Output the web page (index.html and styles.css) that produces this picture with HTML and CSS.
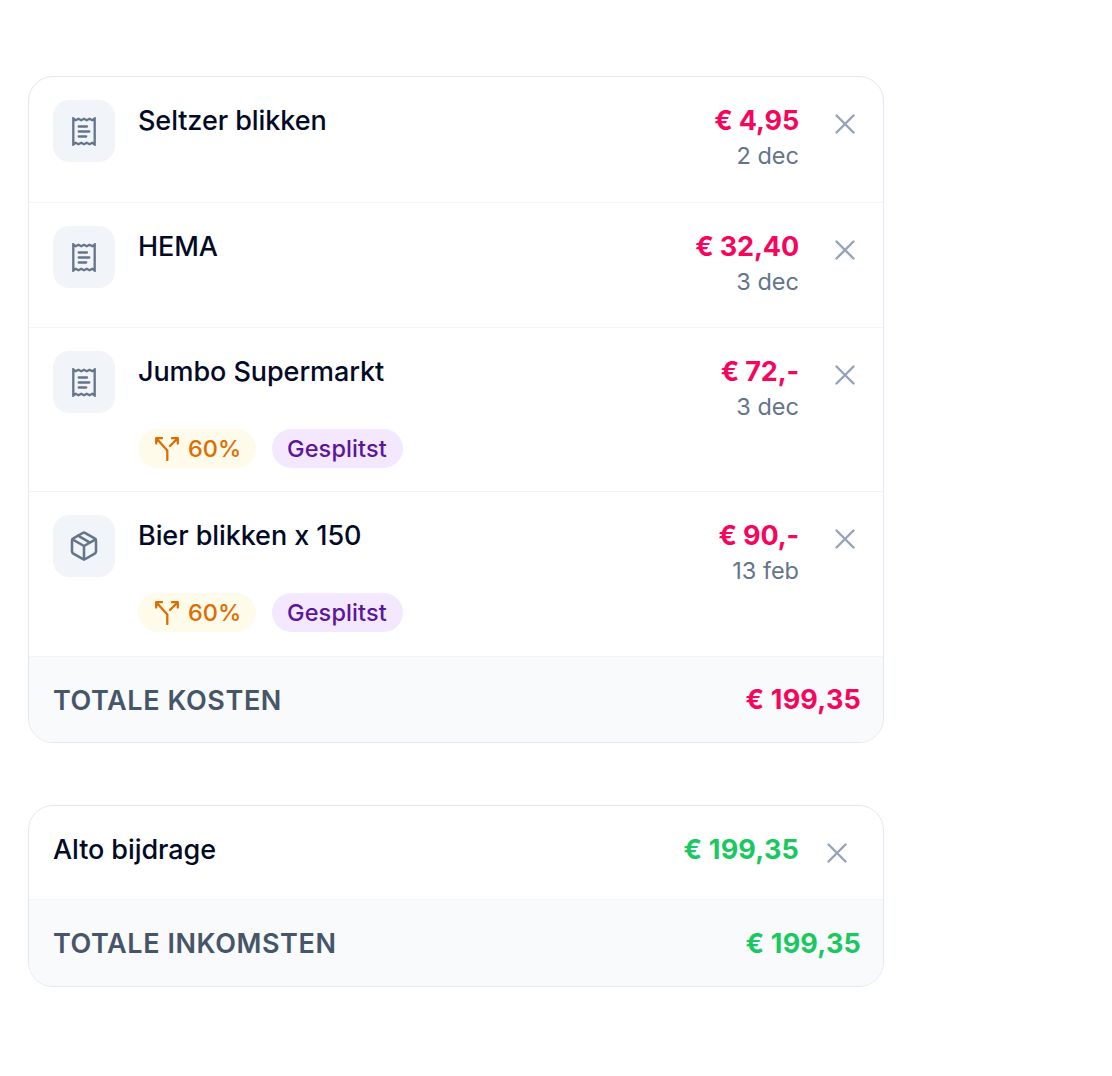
FILE: index.html
```html
<!DOCTYPE html>
<html lang="nl">
<head>
<meta charset="utf-8">
<title>Kosten en inkomsten</title>
<link rel="stylesheet" href="styles.css">
</head>
<body>

<!-- shared icons -->
<svg class="sprite">
  <symbol id="icon-receipt" viewBox="0 0 24 29">
    <path class="edge" d="M1.300 1.500L3.700 3.200L6.500 1.800L9.200 3.200L12 1.800L14.800 3.200L17.500 1.800L20.300 3.200L22.700 1.500V27.500L20.300 25.800L17.500 27.200L14.800 25.800L12 27.200L9.200 25.800L6.500 27.200L3.700 25.800L1.300 27.500z"/>
    <path d="M6.700 9.500h8.300M6.700 14.500h10.600M6.700 19.500h7.500"/>
  </symbol>
  <symbol id="icon-box" viewBox="0 0 24 24">
    <path d="M21 16V8a2 2 0 0 0-1-1.730l-7-4a2 2 0 0 0-2 0l-7 4A2 2 0 0 0 3 8v8a2 2 0 0 0 1 1.730l7 4a2 2 0 0 0 2 0l7-4A2 2 0 0 0 21 16z"/>
    <path d="M3.300 7L12 12l8.700-5M12 22V12M7.500 4.270l9 5.150"/>
  </symbol>
  <symbol id="icon-split" viewBox="0 0 24 24">
    <path d="M12.300 22.900V13.600L1.500 1.500M1.200 6.500V1.200H7M22.500 1.500L15 9M17 1.200H22.800V6.500"/>
  </symbol>
  <symbol id="icon-close" viewBox="0 0 20 20">
    <path d="M1.500 1.500l17 17M18.500 1.500l-17 17"/>
  </symbol>
</svg>

<div id="container">
  <div class="card">
    <div class="row">
      <div class="icon-box"><svg class="receipt"><use href="#icon-receipt"/></svg></div>
      <div class="info">
        <div class="name">Seltzer blikken</div>
      </div>
      <div class="price">
        <div class="amount cost">€ 4,95</div>
        <div class="date">2 dec</div>
      </div>
      <button class="close"><svg><use href="#icon-close"/></svg></button>
    </div>

    <div class="row">
      <div class="icon-box"><svg class="receipt"><use href="#icon-receipt"/></svg></div>
      <div class="info">
        <div class="name">HEMA</div>
      </div>
      <div class="price">
        <div class="amount cost">€ 32,40</div>
        <div class="date">3 dec</div>
      </div>
      <button class="close"><svg><use href="#icon-close"/></svg></button>
    </div>

    <div class="row tall">
      <div class="icon-box"><svg class="receipt"><use href="#icon-receipt"/></svg></div>
      <div class="info">
        <div class="name">Jumbo Supermarkt</div>
        <div class="tags">
          <span class="tag percent"><svg><use href="#icon-split"/></svg>60%</span>
          <span class="tag split">Gesplitst</span>
        </div>
      </div>
      <div class="price">
        <div class="amount cost">€ 72,-</div>
        <div class="date">3 dec</div>
      </div>
      <button class="close"><svg><use href="#icon-close"/></svg></button>
    </div>

    <div class="row tall last">
      <div class="icon-box"><svg class="box"><use href="#icon-box"/></svg></div>
      <div class="info">
        <div class="name">Bier blikken x 150</div>
        <div class="tags">
          <span class="tag percent"><svg><use href="#icon-split"/></svg>60%</span>
          <span class="tag split">Gesplitst</span>
        </div>
      </div>
      <div class="price">
        <div class="amount cost">€ 90,-</div>
        <div class="date">13 feb</div>
      </div>
      <button class="close"><svg><use href="#icon-close"/></svg></button>
    </div>

    <div class="total">
      <span class="total-label">TOTALE KOSTEN</span>
      <span class="amount cost">€ 199,35</span>
    </div>
  </div>

  <div class="card">
    <div class="row income-row">
      <div class="info">
        <div class="name">Alto bijdrage</div>
      </div>
      <div class="price">
        <div class="amount income">€ 199,35</div>
      </div>
      <button class="close"><svg><use href="#icon-close"/></svg></button>
    </div>

    <div class="total">
      <span class="total-label">TOTALE INKOMSTEN</span>
      <span class="amount income">€ 199,35</span>
    </div>
  </div>
</div>

</body>
</html>
```
FILE: styles.css
```css
* {
  box-sizing: border-box;
}

body {
  font-family: Inter, sans-serif;
  background: white;
  color: #020a26;
  margin: 0;
}

.sprite {
  display: none;
}

svg {
  display: block;
  fill: none;
  stroke: currentColor;
  stroke-linecap: round;
  stroke-linejoin: round;
}

#container {
  width: 856px;
  margin: 76px 0 0 28px;
}

.card {
  border: 1.500px solid #e2e8f0;
  border-radius: 25px;
  margin-bottom: 62px;
  overflow: hidden;
}

.row {
  display: flex;
  align-items: flex-start;
  height: 125px;
  padding: 23px 28px 0 24px;
  border-bottom: 1px solid #f1f5f9;
}

.row:first-child {
  height: 126px;
}

.row.tall {
  height: 164px;
}

.row.last {
  height: 165px;
}

.row.income-row {
  height: 94px;
  padding-right: 36px;
}

.icon-box {
  display: flex;
  align-items: center;
  justify-content: center;
  width: 62px;
  height: 62px;
  margin-right: 23px;
  border-radius: 16px;
  background-color: #f1f5f9;
  color: #64748b;
}

.receipt {
  width: 24px;
  height: 29px;
  stroke-width: 2.300px;
}

.receipt, .edge {
  stroke-linejoin: miter;
}

.box {
  width: 32px;
  height: 34px;
  stroke-width: 1.900px;
}

.info {
  flex: 1;
}

.name, .amount {
  font-size: 27px;
  line-height: 42px;
  white-space: nowrap;
}

.name {
  font-weight: 500;
  letter-spacing: -0.080px;
}

.amount {
  font-weight: 650;
  letter-spacing: -0.150px;
}

.cost {
  color: #f5055b;
}

.income {
  color: #19c85f;
}

.price {
  text-align: right;
}

.date {
  color: #64748b;
  font-size: 23.500px;
  line-height: 27px;
}

.close {
  margin: 14px 0 0 36px;
  padding: 0;
  border: none;
  background: none;
  color: #94a3b8;
  cursor: pointer;
}

.income-row .close {
  margin-left: 28px;
}

.close svg {
  width: 20px;
  height: 20px;
  stroke-width: 2.400px;
}

.tags {
  display: flex;
  gap: 16px;
  margin-top: 36px;
}

.tag {
  display: flex;
  align-items: center;
  height: 39px;
  padding: 0 16px;
  border-radius: 20px;
  font-size: 23.500px;
  font-weight: 500;
}

.tag svg {
  width: 24px;
  height: 24px;
  margin: 0 9px 0 1px;
  stroke-width: 2.300px;
}

.percent {
  width: 118px;
  padding-right: 15px;
  background-color: #fffbeb;
  color: #e06c00;
}

.percent svg {
  flex-shrink: 0;
}

.split {
  padding: 0 16px 0 15px;
  background-color: #f3e8fd;
  color: #5b169b;
  letter-spacing: 0.120px;
}

.total {
  display: flex;
  align-items: center;
  justify-content: space-between;
  height: 85px;
  padding: 1px 22px 0 24px;
  background-color: #f8fafc;
}

.income-row + .total {
  height: 86px;
}

.total-label {
  color: #475569;
  font-size: 27px;
  font-weight: 600;
  letter-spacing: 0.580px;
}

.total .amount, .income {
  letter-spacing: 0.200px;
}
```
